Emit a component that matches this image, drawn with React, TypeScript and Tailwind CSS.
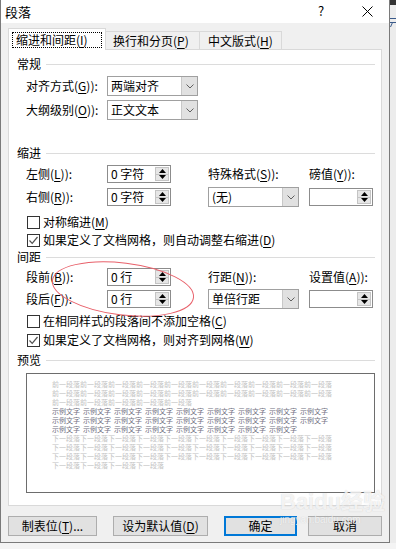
import React from "react";

const Acc = ({ pre, k, post = "):" }: { pre: string; k: string; post?: string }) => (
  <span className="whitespace-nowrap">
    {pre}(<span className="underline underline-offset-2">{k}</span>){post}
  </span>
);

const Tri = ({ up }: { up?: boolean }) => (
  <svg width="7" height="4" viewBox="0 0 7 4">
    {up ? <polygon points="0,4 7,4 3.5,0" fill="#000" /> : <polygon points="0,0 7,0 3.5,4" fill="#000" />}
  </svg>
);

const Chevron = () => (
  <svg width="8" height="5" viewBox="0 0 8 5">
    <polyline points="0.5,0.5 4,4 7.5,0.5" fill="none" stroke="#606060" strokeWidth="1" />
  </svg>
);

const Spin = ({ value }: { value: string }) => (
  <div className="w-[64px] h-[18px] border border-[#8c8c8c] bg-white flex items-center">
    <span className="flex-1 pl-[3px] text-[12px] leading-none whitespace-pre">{value}</span>
    <div className="w-[14px] h-[14px] mr-[1px] flex flex-col border border-[#c4c4c4] bg-[#e6e6e6]">
      <div className="flex-1 flex items-center justify-center border-b border-[#c4c4c4]">
        <Tri up />
      </div>
      <div className="flex-1 flex items-center justify-center">
        <Tri />
      </div>
    </div>
  </div>
);

const Select = ({ value }: { value: string }) => (
  <div className="w-[91px] h-[20px] border border-[#a0a0a0] bg-white flex">
    <span className="flex-1 pl-[3px] flex items-center text-[12px] leading-none">{value}</span>
    <div className="w-[16px] bg-[#e1e1e1] border-l border-[#c8c8c8] flex items-center justify-center">
      <Chevron />
    </div>
  </div>
);

const Check = ({ checked, children }: { checked?: boolean; children: React.ReactNode }) => (
  <div className="h-[14px] flex items-center pl-[18px]">
    <div className="w-[13px] h-[13px] border border-[#333] bg-white flex items-center justify-center">
      {checked && (
        <svg width="11" height="11" viewBox="0 0 11 11">
          <polyline points="1.5,5.5 4.2,8.3 9.5,2" fill="none" stroke="#505050" strokeWidth="1.2" />
        </svg>
      )}
    </div>
    <span className="ml-[3px] text-[12px] leading-none whitespace-nowrap">{children}</span>
  </div>
);

const Heading = ({ text, mt }: { text: string; mt: string }) => (
  <div className={`h-[14px] flex items-center pl-[8px] pr-[6px] ${mt}`}>
    <span className="text-[12px] leading-none">{text}</span>
    <div className="flex-1 h-px bg-[#dcdcdc] ml-[5px]" />
  </div>
);

const Btn = ({ w, children, primary }: { w: string; children: React.ReactNode; primary?: boolean }) => (
  <div
    className={`${w} h-[20px] flex items-center justify-center text-[12px] leading-none bg-[#e1e1e1] ${
      primary ? "border-2 border-[#0078d7]" : "border border-[#adadad]"
    }`}
  >
    {children}
  </div>
);

const rep = (s: string, n: number) => Array.from({ length: n }, () => s).join("");

const PreviewLine = ({ text, color }: { text: string; color: string }) => (
  <div className={`h-[9px] leading-[9px] text-[7px] whitespace-nowrap ${color}`}>{text}</div>
);

const SampleLine = ({ n }: { n: number }) => (
  <div className="h-[9px] leading-[9px] text-[7px] whitespace-nowrap text-[#6f6f80] flex">
    {Array.from({ length: n }).map((_, i) => (
      <span key={i} className="w-[31px] inline-block">
        示例文字
      </span>
    ))}
  </div>
);

export default function App() {
  return (
    <div className="w-[396px] h-[549px] overflow-hidden relative bg-[#f4f4f4] font-['Noto_Sans_CJK_SC','Noto_Sans',sans-serif] text-black flex">
      {/* dialog */}
      <div className="w-[390px] h-[543px] flex flex-col border-l border-r border-b border-[#7a7a7a] bg-[#f0f0f0] shrink-0">
        {/* title bar */}
        <div className="h-[23px] bg-white flex items-center relative">
          <span className="ml-[4px] text-[13px] leading-none">段落</span>
          <span className="absolute left-[317px] top-[4px] text-[13px] leading-none">?</span>
          <svg className="absolute left-[361px] top-[6px]" width="11" height="11" viewBox="0 0 11 11">
            <line x1="0.5" y1="0.5" x2="10.5" y2="10.5" stroke="#000" strokeWidth="1" />
            <line x1="10.5" y1="0.5" x2="0.5" y2="10.5" stroke="#000" strokeWidth="1" />
          </svg>
        </div>

        {/* tabs */}
        <div className="mt-[5px] ml-[7px] h-[21px] flex items-end">
          <div className="w-[98px] h-[22px] -mb-px relative z-10 bg-white border-t border-l border-r border-[#d9d9d9] pl-[3px] pt-[3px]">
            <div className="w-[90px] h-[16px] border border-dotted border-black flex items-center pl-[3px] text-[12px] leading-none whitespace-nowrap">
              缩进和间距(<span className="underline underline-offset-2">I</span>)
            </div>
          </div>
          <div className="w-[95px] h-[18px] -ml-px bg-[#f0f0f0] border-t border-r border-[#d9d9d9] flex items-center pl-[8px] text-[12px] leading-none whitespace-nowrap">
            换行和分页(<span className="underline underline-offset-2">P</span>)
          </div>
          <div className="w-[82px] h-[18px] bg-[#f0f0f0] border-t border-r border-[#d9d9d9] flex items-center pl-[8px] text-[12px] leading-none whitespace-nowrap">
            中文版式(<span className="underline underline-offset-2">H</span>)
          </div>
        </div>

        {/* pane */}
        <div className="ml-[7px] w-[374px] h-[457px] border border-[#d9d9d9] bg-white flex flex-col">
          <Heading text="常规" mt="mt-[7px]" />

          <div className="mt-[5px] h-[20px] flex items-center pl-[17px]">
            <div className="w-[81px] text-[12px] leading-none">
              <Acc pre="对齐方式" k="G" />
            </div>
            <Select value="两端对齐" />
          </div>
          <div className="mt-[4px] h-[20px] flex items-center pl-[17px]">
            <div className="w-[81px] text-[12px] leading-none">
              <Acc pre="大纲级别" k="O" />
            </div>
            <Select value="正文文本" />
          </div>

          <Heading text="缩进" mt="mt-[26px]" />

          <div className="mt-[5px] h-[18px] flex items-center pl-[17px]">
            <div className="w-[81px] text-[12px] leading-none">
              <Acc pre="左侧" k="L" />
            </div>
            <Spin value="0 字符" />
            <div className="ml-[37px] w-[101px] text-[12px] leading-none">
              <Acc pre="特殊格式" k="S" />
            </div>
            <div className="text-[12px] leading-none">
              <Acc pre="磅值" k="Y" />
            </div>
          </div>
          <div className="mt-[4px] h-[20px] flex items-center pl-[17px]">
            <div className="w-[81px] text-[12px] leading-none">
              <Acc pre="右侧" k="R" />
            </div>
            <Spin value="0 字符" />
            <div className="ml-[37px]">
              <Select value="(无)" />
            </div>
            <div className="ml-[10px]">
              <Spin value="" />
            </div>
          </div>

          <div className="mt-[8px]">
            <Check>
              对称缩进(<span className="underline underline-offset-2">M</span>)
            </Check>
          </div>
          <div className="mt-[4px]">
            <Check checked>
              如果定义了文档网格，则自动调整右缩进(<span className="underline underline-offset-2">D</span>)
            </Check>
          </div>

          <Heading text="间距" mt="mt-[3px]" />

          <div className="mt-[4px] h-[18px] flex items-center pl-[17px]">
            <div className="w-[81px] text-[12px] leading-none">
              <Acc pre="段前" k="B" />
            </div>
            <Spin value="0 行" />
            <div className="ml-[37px] w-[101px] text-[12px] leading-none">
              <Acc pre="行距" k="N" />
            </div>
            <div className="text-[12px] leading-none">
              <Acc pre="设置值" k="A" />
            </div>
          </div>
          <div className="mt-[3px] h-[20px] flex items-center pl-[17px]">
            <div className="w-[81px] text-[12px] leading-none">
              <Acc pre="段后" k="F" />
            </div>
            <Spin value="0 行" />
            <div className="ml-[37px]">
              <Select value="单倍行距" />
            </div>
            <div className="ml-[10px]">
              <Spin value="" />
            </div>
          </div>

          <div className="mt-[5px]">
            <Check>
              在相同样式的段落间不添加空格(<span className="underline underline-offset-2">C</span>)
            </Check>
          </div>
          <div className="mt-[5px]">
            <Check checked>
              如果定义了文档网格，则对齐到网格(<span className="underline underline-offset-2">W</span>)
            </Check>
          </div>

          <Heading text="预览" mt="mt-[6px]" />

          <div className="mt-[6px] ml-[17px] w-[349px] h-[120px] border border-[#6d6d6d] bg-white pt-[6px] pl-[25px] flex flex-col">
            <PreviewLine text={rep("前一段落", 10)} color="text-[#c2c2c2]" />
            <PreviewLine text={rep("前一段落", 10)} color="text-[#c2c2c2]" />
            <PreviewLine text={rep("前一段落", 5)} color="text-[#c2c2c2]" />
            <SampleLine n={9} />
            <SampleLine n={9} />
            <SampleLine n={8} />
            <PreviewLine text={rep("下一段落", 10)} color="text-[#c2c2c2]" />
            <PreviewLine text={rep("下一段落", 10)} color="text-[#c2c2c2]" />
            <PreviewLine text={rep("下一段落", 10)} color="text-[#c2c2c2]" />
            <PreviewLine text={rep("下一段落", 4)} color="text-[#c2c2c2]" />
          </div>
        </div>

        {/* buttons */}
        <div className="mt-[10px] ml-[7px] flex items-center">
          <Btn w="w-[89px]">
            <span className="whitespace-nowrap">
              制表位(<span className="underline underline-offset-2">T</span>)...
            </span>
          </Btn>
          <div className="ml-[16px]">
            <Btn w="w-[95px]">
              <span className="whitespace-nowrap">
                设为默认值(<span className="underline underline-offset-2">D</span>)
              </span>
            </Btn>
          </div>
          <div className="ml-[16px]">
            <Btn w="w-[73px]" primary>
              确定
            </Btn>
          </div>
          <div className="ml-[11px]">
            <Btn w="w-[74px]">取消</Btn>
          </div>
        </div>
      </div>

      {/* background window strip */}
      <div className="flex-1 h-[543px] bg-[#ececec] relative overflow-hidden">
        <div className="h-[5px] bg-[#333]" />
        <svg className="absolute left-0 top-[17px]" width="6" height="11" viewBox="0 0 6 11">
          <line x1="0" y1="1.5" x2="6" y2="1.5" stroke="#3a5a8a" strokeWidth="1" />
          <line x1="0" y1="5.5" x2="6" y2="5.5" stroke="#3a5a8a" strokeWidth="1" />
          <line x1="2.5" y1="5.5" x2="0.5" y2="10" stroke="#3a5a8a" strokeWidth="1" />
        </svg>
      </div>

      {/* red annotation ellipse */}
      <svg className="absolute left-0 top-0 pointer-events-none" width="396" height="549" viewBox="0 0 396 549">
        <ellipse cx="123" cy="289" rx="71" ry="26" transform="rotate(7 123 289)" fill="none" stroke="#e8606a" strokeWidth="1" />
      </svg>

      {/* watermark */}
      <div className="absolute left-[280px] top-[491px] pointer-events-none flex flex-col items-start">
        <span className="text-[22px] font-bold leading-none text-[rgba(255,255,255,0.75)] [text-shadow:0_0_1px_rgba(150,150,150,0.45)] font-['Liberation_Sans','Noto_Sans_CJK_SC',sans-serif]">
          Baidu经验
        </span>
        <span className="mt-[2px] text-[10px] leading-none text-[rgba(255,255,255,0.75)] [text-shadow:0_0_1px_rgba(150,150,150,0.4)] font-['Liberation_Sans',sans-serif]">
          jingyan.baidu.com
        </span>
      </div>
    </div>
  );
}
